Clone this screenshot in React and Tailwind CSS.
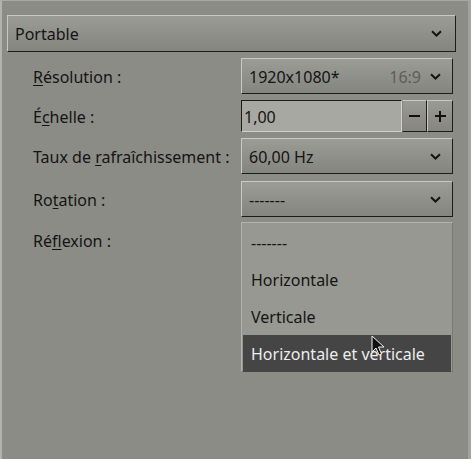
import { useState } from 'react'

const FONT = { fontFamily: '"Noto Sans", "Open Sans", sans-serif' }

function Chevron({ className = '' }) {
  return (
    <svg width="11" height="7" viewBox="0 0 11 7" className={className}>
      <path d="M1 1.2 L5.5 5.5 L10 1.2" fill="none" stroke="#141414" strokeWidth="2" />
    </svg>
  )
}

// Label with one underlined mnemonic letter
function Label({ before, mnemo, after }) {
  return (
    <span className="block pt-[2px] text-[16px] text-[#141414]">
      {before}
      <span className="underline underline-offset-2 decoration-1">{mnemo}</span>
      {after}
    </span>
  )
}

function Combo({ children, right, className = '' }) {
  return (
    <div
      className={`flex items-center h-full border border-t-[#c9c9c2] border-l-[#c9c9c2] border-r-[#1c1c1c] border-b-[#1c1c1c] bg-gradient-to-b from-[#9c9c96] to-[#85857f] pl-[7px] pr-[11px] ${className}`}
    >
      <span className="flex-1 pt-[1px] text-[16px] text-[#141414] truncate">{children}</span>
      {right}
      <Chevron className="ml-[9px]" />
    </div>
  )
}

function Cursor() {
  return (
    <svg width="14" height="22" viewBox="0 0 14 22" className="absolute left-[129px] top-[112px]">
      <path
        d="M1 1 L1 17 L5 13 L8 20 L10.5 19 L7.5 12 L13 12 Z"
        fill="#111"
        stroke="#f2f2f2"
        strokeWidth="1"
        strokeLinejoin="round"
      />
    </svg>
  )
}

export default function App() {
  const [reflexion] = useState('Horizontale et verticale')
  const options = ['-------', 'Horizontale', 'Verticale', 'Horizontale et verticale']

  return (
    <div
      style={FONT}
      className="w-[471px] h-[459px] bg-[#8c8c87] border-t border-l-2 border-r-[3px] border-t-[#a9a9a4] border-l-[#b3b3ae] border-r-[#a3a39e] pl-[5px] pr-[12px] pt-[14px] overflow-hidden"
    >
      {/* profile selector */}
      <div className="h-[37px]">
        <Combo className="pl-[6px] pr-[13px]">Portable</Combo>
      </div>

      <div className="flex flex-col gap-[6px] mt-[6px] pl-[26px] pr-[3px]">
        <div className="flex items-center h-[36px]">
          <div className="w-[208px]">
            <Label mnemo="R" after="ésolution :" />
          </div>
          <div className="flex-1 h-full">
            <Combo right={<span className="pt-[1px] text-[16px] text-[#5d5d59]">16:9</span>}>1920x1080*</Combo>
          </div>
        </div>

        <div className="flex items-center h-[32px]">
          <div className="w-[208px]">
            <Label before="É" mnemo="c" after="helle :" />
          </div>
          <div className="flex-1 h-full flex">
            <div className="flex-1 flex items-center bg-[#a8a8a2] border border-t-[#1c1c1c] border-l-[#1c1c1c] border-b-[#d2d2cc] border-r-[#d2d2cc] pl-[2px] pt-[1px] text-[16px] text-[#141414]">
              1,00
            </div>
            <button className="w-[25px] flex items-center justify-center bg-gradient-to-b from-[#9a9a94] to-[#86867f] border border-t-[#c9c9c2] border-l-[#86867f] border-r-[#1c1c1c] border-b-[#1c1c1c]">
              <span className="block w-[11px] h-[2px] bg-[#111]" />
            </button>
            <button className="w-[26px] flex items-center justify-center bg-gradient-to-b from-[#9a9a94] to-[#86867f] border border-t-[#c9c9c2] border-l-[#c9c9c2] border-r-[#1c1c1c] border-b-[#1c1c1c] relative">
              <span className="block w-[11px] h-[2px] bg-[#111]" />
              <span className="absolute block w-[2px] h-[11px] bg-[#111]" />
            </button>
          </div>
        </div>

        <div className="flex items-center h-[36px]">
          <div className="w-[208px]">
            <Label before="Taux de " mnemo="r" after="afraîchissement :" />
          </div>
          <div className="flex-1 h-full">
            <Combo>60,00 Hz</Combo>
          </div>
        </div>

        <div className="flex items-center h-[36px] mt-[1px]">
          <div className="w-[208px]">
            <Label before="Ro" mnemo="t" after="ation :" />
          </div>
          <div className="flex-1 h-full">
            <Combo>-------</Combo>
          </div>
        </div>

        <div className="flex items-center h-[36px] -mt-[1px]">
          <div className="w-[208px]">
            <Label before="Ré" mnemo="fl" after="exion :" />
          </div>
          <div className="flex-1 h-full relative">
            {/* combo face stays hidden behind the open list */}
            <Combo />
            <div className="absolute left-0 top-0 w-[212px] h-[150px] bg-[#989892] border border-[#b4b4ae] border-r-[#7a7a75] border-b-[#7a7a75] pt-[1px] px-[1px]">
              {options.map((o) => (
                <div
                  key={o}
                  className={`h-[37px] flex items-center pl-[8px] text-[16px] ${
                    o === reflexion ? 'bg-[#454545] text-[#ededed]' : 'text-[#141414]'
                  }`}
                >
                  {o}
                </div>
              ))}
              <Cursor />
            </div>
          </div>
        </div>
      </div>
    </div>
  )
}
